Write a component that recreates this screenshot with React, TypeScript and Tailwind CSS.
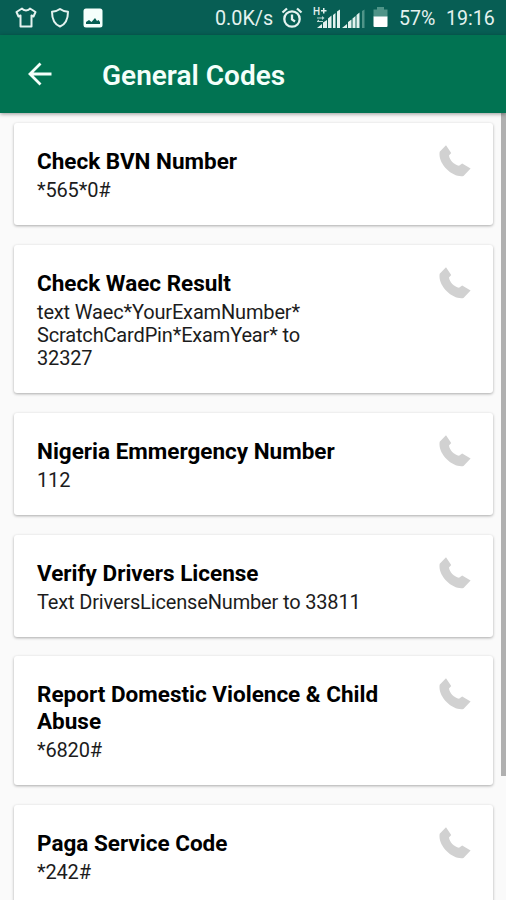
const codes = [
  { title: "Check BVN Number", lines: ["*565*0#"] },
  {
    title: "Check Waec Result",
    lines: ["text Waec*YourExamNumber*", "ScratchCardPin*ExamYear* to", "32327"],
  },
  { title: "Nigeria Emmergency Number", lines: ["112"] },
  { title: "Verify Drivers License", lines: ["Text DriversLicenseNumber to 33811"] },
  { title: "Report Domestic Violence & Child Abuse", lines: ["*6820#"] },
  { title: "Paga Service Code", lines: ["*242#"] },
];

export default function App() {
  return (
    <div className="flex h-[900px] w-[506px] flex-col overflow-hidden bg-[#fafafa] font-[Roboto,sans-serif] text-black">
      <StatusBar />
      <header className="z-10 flex h-[78px] shrink-0 items-center bg-[#017352] pl-[28px] shadow-[0_1px_4px_rgba(0,0,0,0.4)]">
        <svg width="24" height="24" viewBox="0 0 24 24" fill="none" stroke="#f4fffa" strokeWidth="2.8">
          <path d="M23.5 12H3M12.5 1.5 2 12l10.5 10.5" />
        </svg>
        <h1 className="ml-[50px] mt-[3px] text-[28px] font-semibold leading-none text-[#f4fffa]">General Codes</h1>
      </header>
      <div className="flex min-h-0 flex-1">
        <main className="flex w-[501px] flex-col gap-[19.75px] pl-[14px] pr-[8px] pt-[10.4px]">
          {codes.map((code) => (
            <CodeCard key={code.title} {...code} />
          ))}
        </main>
        <div className="h-[663px] w-[5px] bg-[#b0b0b0]" />
      </div>
    </div>
  );
}

function CodeCard({ title, lines }: { title: string; lines: string[] }) {
  return (
    <section className="flex shrink-0 justify-between rounded-[3px] bg-white pb-[23px] pl-[23px] pr-[22px] pt-[25px] shadow-[0_1px_3px_rgba(0,0,0,0.32)]">
      <div className="w-[350px]">
        <h2 className="text-[22.5px] font-bold leading-[27px]">{title}</h2>
        <div className="mt-[4px] text-[20px] leading-[23px] tracking-[-0.16px] text-[#1c1c1c]">
          {lines.map((line) => (
            <p key={line} className="whitespace-nowrap">
              {line}
            </p>
          ))}
        </div>
      </div>
      <svg className="-mt-[3px]" width="32" height="33" viewBox="0 0 32 33" fill="#d1d1d1">
        <path d="M7 .3 12.200 7.900 10 10.500C10.500 15 15 19.700 20 20.700L23.200 18.500 31.600 23.400 24.500 31C14 33-1.500 19 .7 6.800Z" />
      </svg>
    </section>
  );
}

function StatusBar() {
  return (
    <div className="flex h-[35px] shrink-0 items-center bg-[#075e54] text-[19px] text-[#e4f2ef]">
      <svg className="ml-[15px]" width="22" height="22" viewBox="0 0 22 22" fill="none" stroke="currentColor" strokeWidth="2" strokeLinejoin="round">
        <path d="M7 1.500C8.500 4 13.500 4 15 1.500L20.500 5 18.500 9.500 16.500 8.500V19.500H5.500V8.500L3.500 9.500 1.500 5Z" />
      </svg>
      <svg className="ml-[13px]" width="20" height="22" viewBox="0 0 20 22" fill="none" stroke="currentColor" strokeWidth="2" strokeLinejoin="round">
        <path d="M10 2C8 3.500 5 4.500 2 4.700 2 12 4 17 10 19.500 16 17 18 12 18 4.700 15 4.500 12 3.500 10 2Z" />
      </svg>
      <svg className="ml-[13px]" width="20" height="20" viewBox="0 0 20 20">
        <rect x=".5" y=".5" width="19" height="19" rx="2.500" fill="#f5fffc" />
        <path d="M3 16V14L6 12L8.500 14L12 10L14 13L15.500 12L17 14V16Z" fill="#075e54" />
      </svg>
      <span className="ml-[112px] mt-[2px] w-[58px] whitespace-nowrap text-[19.8px]">0.0K/s</span>
      <svg className="ml-[8px]" width="22" height="22" viewBox="0 0 22 22" fill="none" stroke="currentColor" strokeWidth="2.300">
        <circle cx="11" cy="12" r="7.700" />
        <path d="M11 7.500V12.500L14 14.500M1.500 5.500 6 1.500M16 1.500 20.500 5.500" />
      </svg>
      <Signal />
      <svg className="ml-[7px]" width="15" height="21" viewBox="0 0 15 21">
        <path d="M4 0h7v2.500h3.500V10H.5V2.500H4Z" fill="#4f9488" />
        <path d="M.5 9.500h14V19a1 1 0 0 1-1 1h-12a1 1 0 0 1-1-1Z" fill="#fff" />
      </svg>
      <span className="ml-[11px] mt-[2px] w-[47px] text-[19.6px]">57%</span>
      <span className="mt-[2px] whitespace-nowrap text-[19.6px]">19:16</span>
    </div>
  );
}

function Signal() {
  return (
    <svg className="ml-[10px]" width="53" height="24" viewBox="0 0 53 24" fill="#e4f2ef">
      <text x="0" y="9" fontSize="10" fontWeight="500" fontFamily="Roboto">H</text>
      <path d="M8 4h2V2h1.500v2h2v1.500h-2v2H10v-2H8Z" />
      <path d="M4 11.500h5v-1.500l2.500 2-2.500 2v-1.500H4ZM4 15l2-1.500V15h4v1H4Z" opacity=".8" />
      <path d="M4 22l5-4v4ZM10 16.500l4-2.500v8h-4ZM15 12.500l3.500-3V22H15ZM20 9l2.500-2V22H20ZM24 5.500l3-2V22h-3Z" />
      <path d="M29 22l5-4v4ZM35 16l3.500-2.500V22H35ZM39.500 12.500l3-2.500v12h-3ZM43.500 9l3-2.500V22h-3Z" />
      <path d="M49 5l2.500-1.500V22H49Z" fill="#4f9488" />
    </svg>
  );
}
